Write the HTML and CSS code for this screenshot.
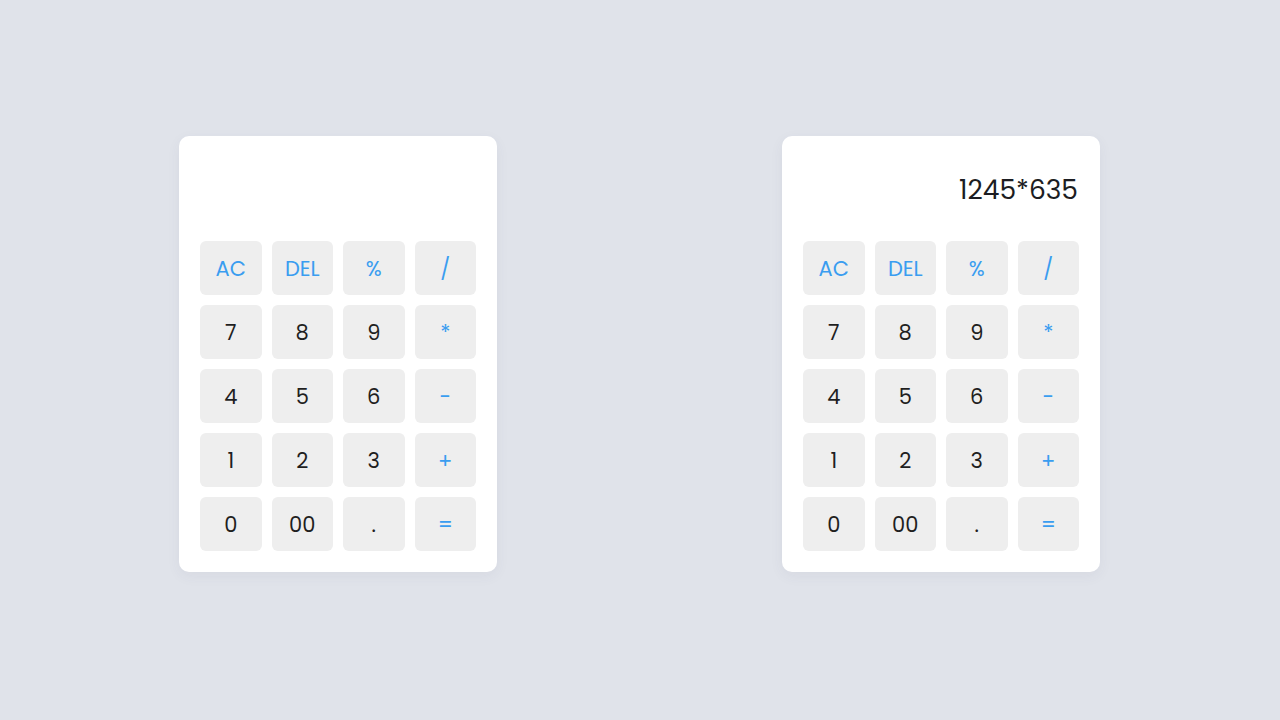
FILE: index.html
```html
<!DOCTYPE html>
<html lang="en">
<head>
<meta charset="utf-8">
<title>Calculator</title>
<link rel="stylesheet" href="styles.css">
</head>
<body>
<main class="stage">
  <section class="calc">
    <div class="display"></div>
    <div class="keys">
      <button class="key op">AC</button>
      <button class="key op">DEL</button>
      <button class="key op">%</button>
      <button class="key op">/</button>
      <button class="key">7</button>
      <button class="key">8</button>
      <button class="key">9</button>
      <button class="key op">*</button>
      <button class="key">4</button>
      <button class="key">5</button>
      <button class="key">6</button>
      <button class="key op">-</button>
      <button class="key">1</button>
      <button class="key">2</button>
      <button class="key">3</button>
      <button class="key op">+</button>
      <button class="key">0</button>
      <button class="key">00</button>
      <button class="key">.</button>
      <button class="key op">=</button>
    </div>
  </section>
  <section class="calc">
    <div class="display">1245*635</div>
    <div class="keys">
      <button class="key op">AC</button>
      <button class="key op">DEL</button>
      <button class="key op">%</button>
      <button class="key op">/</button>
      <button class="key">7</button>
      <button class="key">8</button>
      <button class="key">9</button>
      <button class="key op">*</button>
      <button class="key">4</button>
      <button class="key">5</button>
      <button class="key">6</button>
      <button class="key op">-</button>
      <button class="key">1</button>
      <button class="key">2</button>
      <button class="key">3</button>
      <button class="key op">+</button>
      <button class="key">0</button>
      <button class="key">00</button>
      <button class="key">.</button>
      <button class="key op">=</button>
    </div>
  </section>
</main>
</body>
</html>
```
FILE: styles.css
```css
* { box-sizing: border-box; }
html, body { margin: 0; padding: 0; }
body {
  background: #e0e3ea;
  font-family: "Poppins", "Lato", "Noto Sans", sans-serif;
  width: 1280px;
  height: 720px;
  overflow: hidden;
}
.stage {
  display: flex;
  justify-content: flex-start;
  gap: 285px;
  padding-top: 136px;
  padding-left: 179px;
}
.calc {
  width: 318px;
  background: #ffffff;
  border-radius: 10px;
  padding: 21px;
  box-shadow: 0 4px 14px rgba(60, 70, 100, 0.06);
}
.display {
  height: 64px;
  margin-bottom: 20px;
  padding-top: 1px;
  display: flex;
  align-items: center;
  justify-content: flex-end;
  padding-right: 1px;
  font-size: 26.5px;
  color: #1c1d22;
}
.keys {
  display: grid;
  grid-template-columns: repeat(4, 1fr);
  grid-auto-rows: 54px;
  gap: 10px;
}
.key {
  border: none;
  background: #eeeeee;
  border-radius: 6px;
  font-family: inherit;
  font-size: 21px;
  color: #1f1f1f;
  padding: 0;
  display: flex;
  align-items: center;
  justify-content: center;
}
.key.op { color: #3a9df0; }
```
